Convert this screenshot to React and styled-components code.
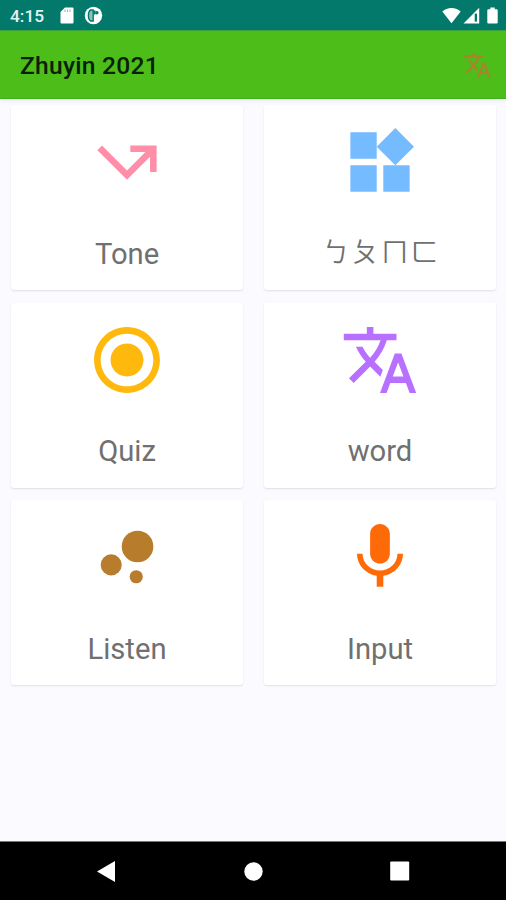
import React from "react";
import styled, { createGlobalStyle } from "styled-components";

const GlobalStyle = createGlobalStyle`
  * { box-sizing: border-box; }
  body { margin: 0; font-family: Roboto, "Noto Sans CJK TC", sans-serif; }
`;

const Screen = styled.div`
  width: 506px;
  height: 900px;
  display: flex;
  flex-direction: column;
  background: #fbfaff;
  overflow: hidden;
`;

const StatusBar = styled.header`
  height: 30px;
  flex: none;
  display: flex;
  align-items: center;
  justify-content: space-between;
  padding: 1px 8px 0 10px;
  background: #03796c;
  color: #fff;
`;

const StatusGroup = styled.div`
  display: flex;
  align-items: center;
  gap: ${(p) => p.$gap}px;
`;

const Clock = styled.span`
  width: 35px;
  margin-right: 15px;
  padding-top: 1px;
  font-size: 17.3px;
  line-height: 20px;
  font-weight: 500;
  color: #e4f3f0;
  white-space: nowrap;
`;

const AppBar = styled.div`
  height: 69px;
  flex: none;
  display: flex;
  align-items: center;
  justify-content: space-between;
  padding: 1px 14px 0 20px;
  background: #4dbd19;
  border-top: 1px solid #38a33a;
  border-bottom: 1px solid #3cb31c;
  box-shadow: 0 1px 5px rgba(60, 60, 60, 0.12);
`;

const Title = styled.h1`
  margin: 0;
  padding-top: 1px;
  font-size: 24.6px;
  line-height: 30px;
  font-weight: 500;
  letter-spacing: 0.25px;
  color: #0b200a;
`;

const Grid = styled.main`
  flex: 1;
  display: grid;
  grid-template-columns: 232px 232px;
  grid-auto-rows: 185px;
  gap: 12.5px 21px;
  align-content: start;
  padding: 6px 0 0 11px;
`;

const Card = styled.section`
  display: flex;
  flex-direction: column;
  align-items: center;
  padding-top: 17px;
  border-radius: 3px;
  background: #fff;
  box-shadow: 0 1px 2px rgba(40, 40, 60, 0.13);
`;

const Label = styled.span`
  margin-top: 33.5px;
  font-size: 29.2px;
  line-height: 36px;
  color: #707070;
  white-space: nowrap;
`;

const PhoneticLabel = styled(Label)`
  margin-top: 33px;
  padding-left: 2px;
  font-size: 27.5px;
  font-weight: 350;
  letter-spacing: 2px;
`;

const NavBar = styled.nav`
  height: 59px;
  flex: none;
  display: grid;
  grid-template-columns: 180px 146px 180px;
  align-items: center;
  background: #000;
  border-top: 1px solid #777;
`;

const NavButton = styled.div`
  display: flex;
  justify-content: ${(p) => p.$align};
  padding: ${(p) => p.$pad || "0"};
`;

const Drawing = styled.svg`
  flex: none;
  margin-left: ${(p) => p.$left || 0}px;
`;

const TRANSLATE =
  "M12.87 15.07l-2.54-2.51.03-.03c1.74-1.94 2.98-4.17 3.71-6.53H17V4h-7V2H8v2H1v1.99h11.17C11.5 7.92 10.44 9.75 9 11.35 8.07 10.32 7.3 9.19 6.69 8h-2c.73 1.63 1.73 3.17 2.98 4.56l-5.09 5.02L4 19l5-5 3.11 3.11.76-2.04zM18.5 10h-2L12 22h2l1.12-3h4.75L21 22h2l-4.5-12zm-2.62 7l1.62-4.33L19.12 17h-3.24z";

const Icon = ({ size, color, children }) => (
  <Drawing width={size} height={size} viewBox="-0.15 -0.15 24.3 24.3" fill={color}>
    {children}
  </Drawing>
);

const ITEMS = [
  {
    label: "Tone",
    color: "#ff8fa9",
    art: <path d="M3 8.41l9 9 7-7V15h2V7h-8v2h4.59L12 14.59 4.41 7z" />,
  },
  {
    label: "ㄅㄆㄇㄈ",
    phonetic: true,
    color: "#74bcff",
    art: (
      <path d="M13 13v8h8v-8h-8zM3 21h8v-8H3v8zM3 3v8h8V3H3zm13.66-1.31L11 7.34 16.66 13l5.66-5.66-5.66-5.65z" />
    ),
  },
  {
    label: "Quiz",
    color: "#ffb90c",
    art: (
      <path d="M12 7c-2.76 0-5 2.24-5 5s2.24 5 5 5 5-2.24 5-5-2.24-5-5-5zm0-5C6.48 2 2 6.48 2 12s4.48 10 10 10 10-4.48 10-10S17.52 2 12 2zm0 18c-4.42 0-8-3.58-8-8s3.58-8 8-8 8 3.58 8 8-3.58 8-8 8z" />
    ),
  },
  { label: "word", color: "#b770ff", art: <path d={TRANSLATE} /> },
  {
    label: "Listen",
    color: "#b87c2d",
    art: (
      <>
        <circle cx="7.2" cy="14.4" r="3.2" />
        <circle cx="14.8" cy="18" r="2" />
        <circle cx="15.2" cy="8.8" r="4.8" />
      </>
    ),
  },
  {
    label: "Input",
    color: "#ff6a08",
    art: (
      <path d="M12 14c1.66 0 2.99-1.34 2.99-3L15 5c0-1.66-1.34-3-3-3S9 3.34 9 5v6c0 1.66 1.34 3 3 3zm5.3-3c0 3-2.54 5.1-5.3 5.1S6.7 14 6.7 11H5c0 3.41 2.72 6.23 6 6.72V21h2v-3.28c3.28-.48 6-3.3 6-6.72h-1.7z" />
    ),
  },
];

export default function App() {
  return (
    <Screen>
      <GlobalStyle />
      <StatusBar>
        <StatusGroup $gap={0}>
          <Clock>4:15</Clock>
          <Drawing width="14" height="17" viewBox="0 0 14 17">
            <path d="M5 .5h7.5a1 1 0 0 1 1 1v14a1 1 0 0 1-1 1h-11a1 1 0 0 1-1-1V5z" fill="#fff" />
            <path d="M5 2.5v2.6M7.5 2.5v2.6M10 2.5v2.6" stroke="#8cc0ba" strokeWidth="1.1" />
          </Drawing>
          <Drawing width="19" height="19" viewBox="0 0 19 19" $left={10}>
            <circle cx="9.5" cy="9.5" r="8.7" fill="#fff" />
            <path
              d="M9.2 4H6.8Q4.4 5 4.4 9.5T6.8 15H9.2z"
              fill="#8cc0ba"
              stroke="#03796c"
              strokeWidth="1.4"
            />
            <path d="M9.5 4.5h2v4h-2z" fill="#03796c" />
            <circle cx="12.9" cy="6.8" r="1.7" fill="#03796c" />
          </Drawing>
        </StatusGroup>
        <StatusGroup $gap={2}>
          <Drawing width="19" height="17" viewBox="0 0 19 17">
            <path d="M9.5 16.2L.3 4.5Q4 1 9.5 1t9.2 3.5z" fill="#fff" />
          </Drawing>
          <Drawing width="17" height="17" viewBox="0 0 17 17">
            <path d="M.5 16.5L16.2.8v15.7z" fill="#fff" />
            <path d="M11.7 6.6h2.3v8h-2.3z" fill="#03796c" />
          </Drawing>
          <Drawing width="11" height="17" viewBox="0 0 11 17" $left={5}>
            <path d="M3.3.6h4.4v1.7h2q1 0 1 1v12.2q0 1-1 1H1.3q-1 0-1-1V3.3q0-1 1-1h2z" fill="#fff" />
          </Drawing>
        </StatusGroup>
      </StatusBar>
      <AppBar>
        <Title>Zhuyin 2021</Title>
        <Icon size={30} color="#ab832d">
          <path d={TRANSLATE} />
        </Icon>
      </AppBar>
      <Grid>
        {ITEMS.map((item) => (
          <Card key={item.label}>
            <Icon size={80} color={item.color}>
              {item.art}
            </Icon>
            {item.phonetic ? (
              <PhoneticLabel lang="zh-TW">{item.label}</PhoneticLabel>
            ) : (
              <Label>{item.label}</Label>
            )}
          </Card>
        ))}
      </Grid>
      <NavBar>
        <NavButton $align="flex-start" $pad="0 0 0 97px">
          <Drawing width="18" height="21" viewBox="0 0 18 21">
            <path d="M0 10.5L18 0v21z" fill="#fff" />
          </Drawing>
        </NavButton>
        <NavButton $align="center" $pad="0 0 0 1px">
          <Drawing width="19" height="19" viewBox="0 0 19 19">
            <circle cx="9.5" cy="9.5" r="9.2" fill="#fff" />
          </Drawing>
        </NavButton>
        <NavButton $align="flex-start" $pad="0 0 0 63.5px">
          <Drawing width="20" height="20" viewBox="0 0 20 20">
            <rect x=".2" y=".5" width="19" height="19" rx="1" fill="#fff" />
          </Drawing>
        </NavButton>
      </NavBar>
    </Screen>
  );
}
